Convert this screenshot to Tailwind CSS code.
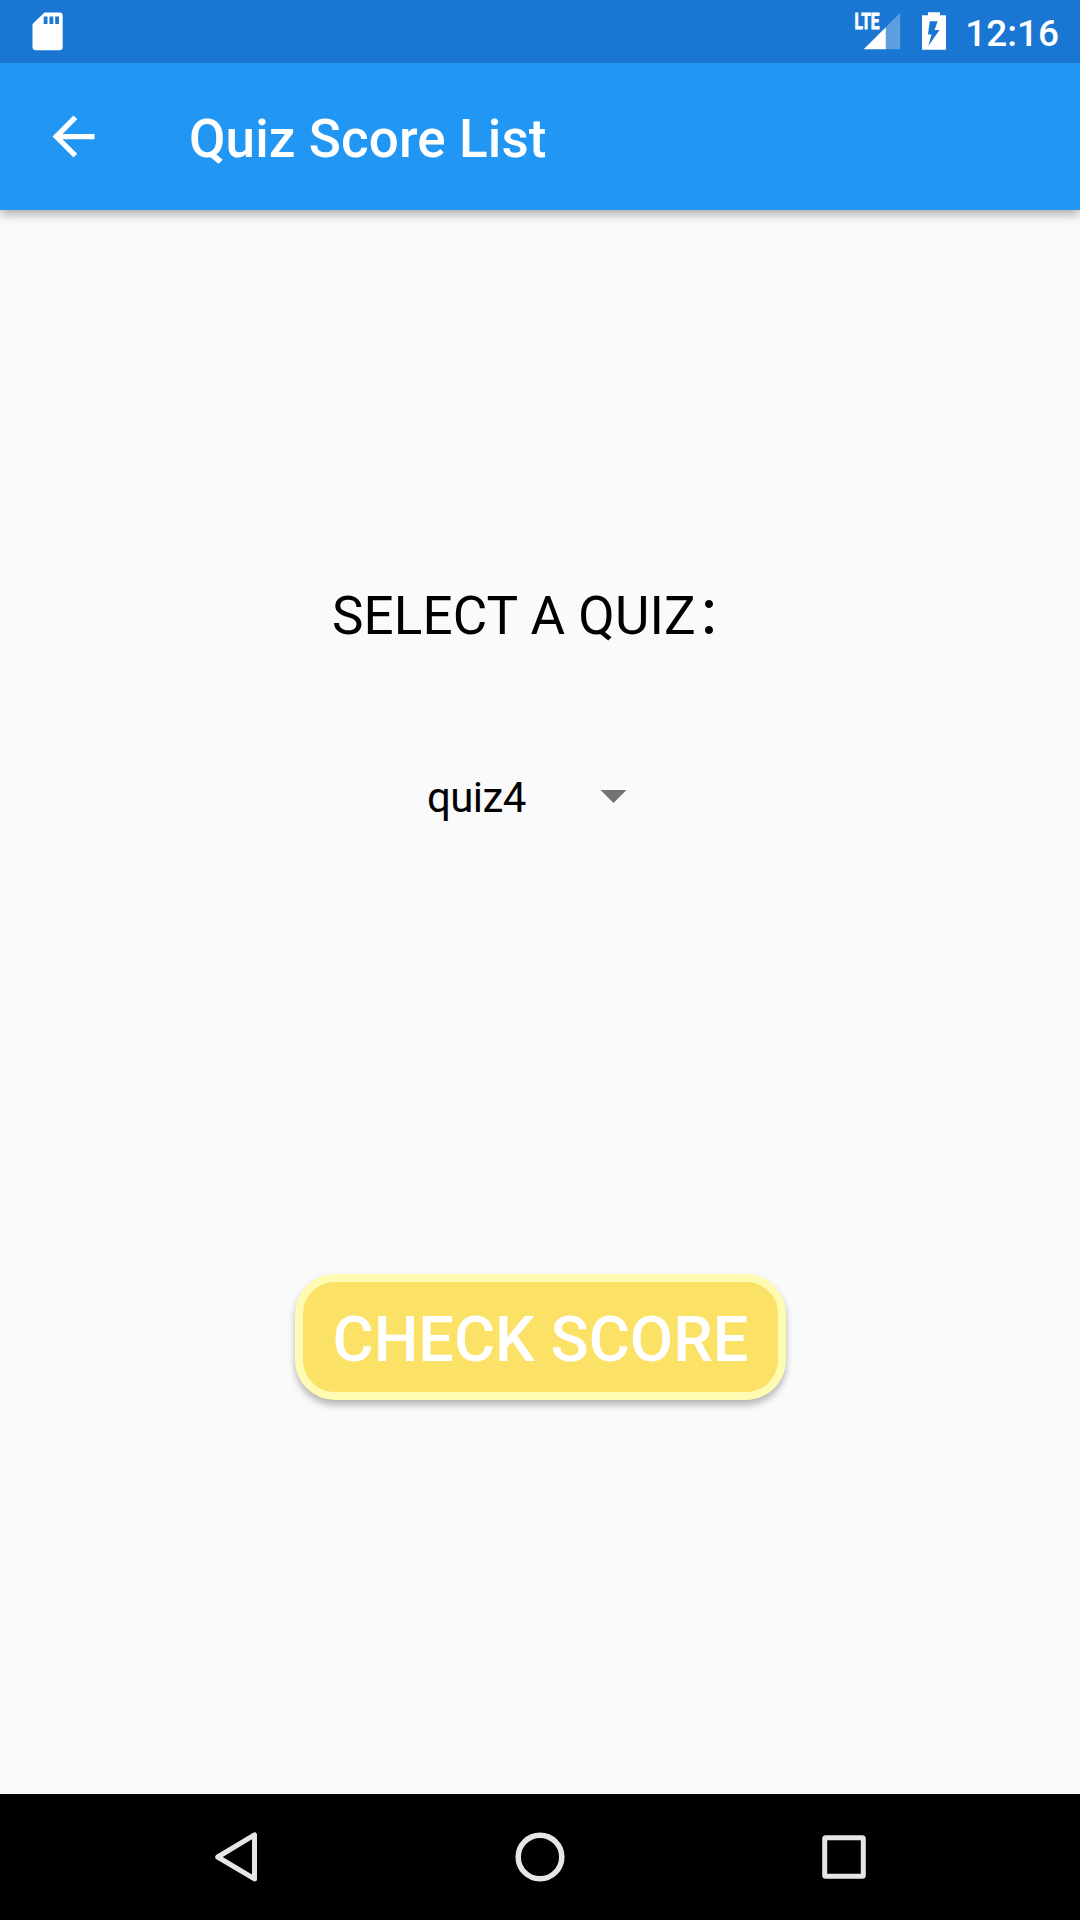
<!DOCTYPE html>
<html lang="en">
<head>
<meta charset="utf-8">
<title>Quiz Score List</title>
<script src="https://cdn.jsdelivr.net/npm/@tailwindcss/browser@4"></script>
</head>
<body class="flex h-[1920px] w-[1080px] flex-col overflow-hidden bg-[#fafafa] font-[Roboto,sans-serif]">
  <!-- Status bar -->
  <div class="relative z-20 flex h-[63px] shrink-0 items-start justify-between bg-[#1976d2] text-white">
    <svg class="ml-8 mt-3" width="32" height="40" viewBox="0 0 32 40" fill="currentColor">
      <path fill-rule="evenodd" d="M12.500 .5H27.500a3.200 3.200 0 0 1 3.200 3.200V35a3.200 3.200 0 0 1-3.200 3.200H4A3.500 3.500 0 0 1 .5 35V12ZM11.700 4.500V12H15.500V4.500ZM17.500 4.500V12H21.300V4.500ZM23.200 4.500V12H27V4.500Z"/>
    </svg>
    <div class="flex items-start pr-[21px]">
      <svg class="overflow-visible" width="47" height="50" viewBox="0 -12 47 50" fill="currentColor">
        <path d="M45.200 .8V37.300H30.800V15.200Z" fill-opacity=".3"/>
        <path d="M30.800 15.200V37.300H8.700Z"/>
        <text x="-0.500" y="16.900" font-size="21.500" font-weight="700" stroke="currentColor" stroke-width=".8" textLength="25" lengthAdjust="spacingAndGlyphs">LTE</text>
      </svg>
      <svg class="ml-5 mt-3" width="24" height="38" viewBox="0 0 24 38" fill="currentColor">
        <path fill-rule="evenodd" d="M6 .3H18V3.200H24V37.700H0V3.200H6ZM7.700 9.200L6 22.500H9.500L6.300 34L17.600 18H12.500L15.700 9.200Z"/>
      </svg>
      <span class="ml-[19px] mt-[12px] text-[37px] leading-[43px] font-medium">12:16</span>
    </div>
  </div>
  <!-- App bar -->
  <header class="relative z-10 flex h-[147px] shrink-0 items-center bg-[#2196f3] text-white shadow-[0_4px_10px_rgba(0,0,0,0.33)]">
    <svg class="ml-[42px]" width="63" height="63" viewBox="0 0 24 24" fill="currentColor">
      <path d="M20 11H7.830l5.590-5.590L12 4l-8 8 8 8 1.410-1.410L7.830 13H20v-2z"/>
    </svg>
    <h1 class="ml-[84px] mt-[4px] text-[53px] leading-[62px] font-medium tracking-[0.1px]">Quiz Score List</h1>
  </header>
  <!-- Content -->
  <main class="flex grow flex-col text-black">
    <p class="ml-[332px] mt-[375px] h-[62px] whitespace-nowrap font-[Roboto,'Noto_Sans_CJK_SC',sans-serif] text-[53px] leading-[62px] tracking-[0.1px]" lang="zh-CN">SELECT A QUIZ：</p>
    <div class="ml-[426px] mt-[126px] flex h-[50px] items-center">
      <span class="w-[174px] text-[42px] leading-[50px] tracking-[-0.6px] indent-px">quiz4</span>
      <svg class="-mt-[3px]" width="27" height="13" viewBox="0 0 27 13"><path d="M.5 0H26.500L13.500 13Z" fill="#737373"/></svg>
    </div>
    <button class="ml-[295px] mt-[451px] h-[126px] w-[491px] rounded-[40px] border-8 border-[#fffbb3] bg-[#fbe166] pt-[5px] text-[63px] leading-[74px] font-medium whitespace-nowrap text-white shadow-[0_5px_7px_rgba(0,0,0,0.28)]">CHECK SCORE</button>
  </main>
  <!-- Navigation bar -->
  <nav class="flex h-[126px] shrink-0 items-center bg-black text-[#e6e6e6]">
    <svg class="ml-[214px]" width="44" height="50" viewBox="0 0 44 50" fill="none" stroke="currentColor" stroke-width="5" stroke-linejoin="round"><path d="M40.500 2.900V46.900L3.700 25Z"/></svg>
    <svg class="ml-[257px]" width="50" height="50" viewBox="0 0 50 50" fill="none" stroke="currentColor" stroke-width="5.500"><circle cx="25" cy="25" r="21.800"/></svg>
    <svg class="ml-[257px]" width="44" height="44" viewBox="0 0 44 44" fill="none" stroke="currentColor" stroke-width="5" stroke-linejoin="round"><rect x="2.700" y="2.700" width="38.600" height="38.600" rx="1"/></svg>
  </nav>
</body>
</html>
